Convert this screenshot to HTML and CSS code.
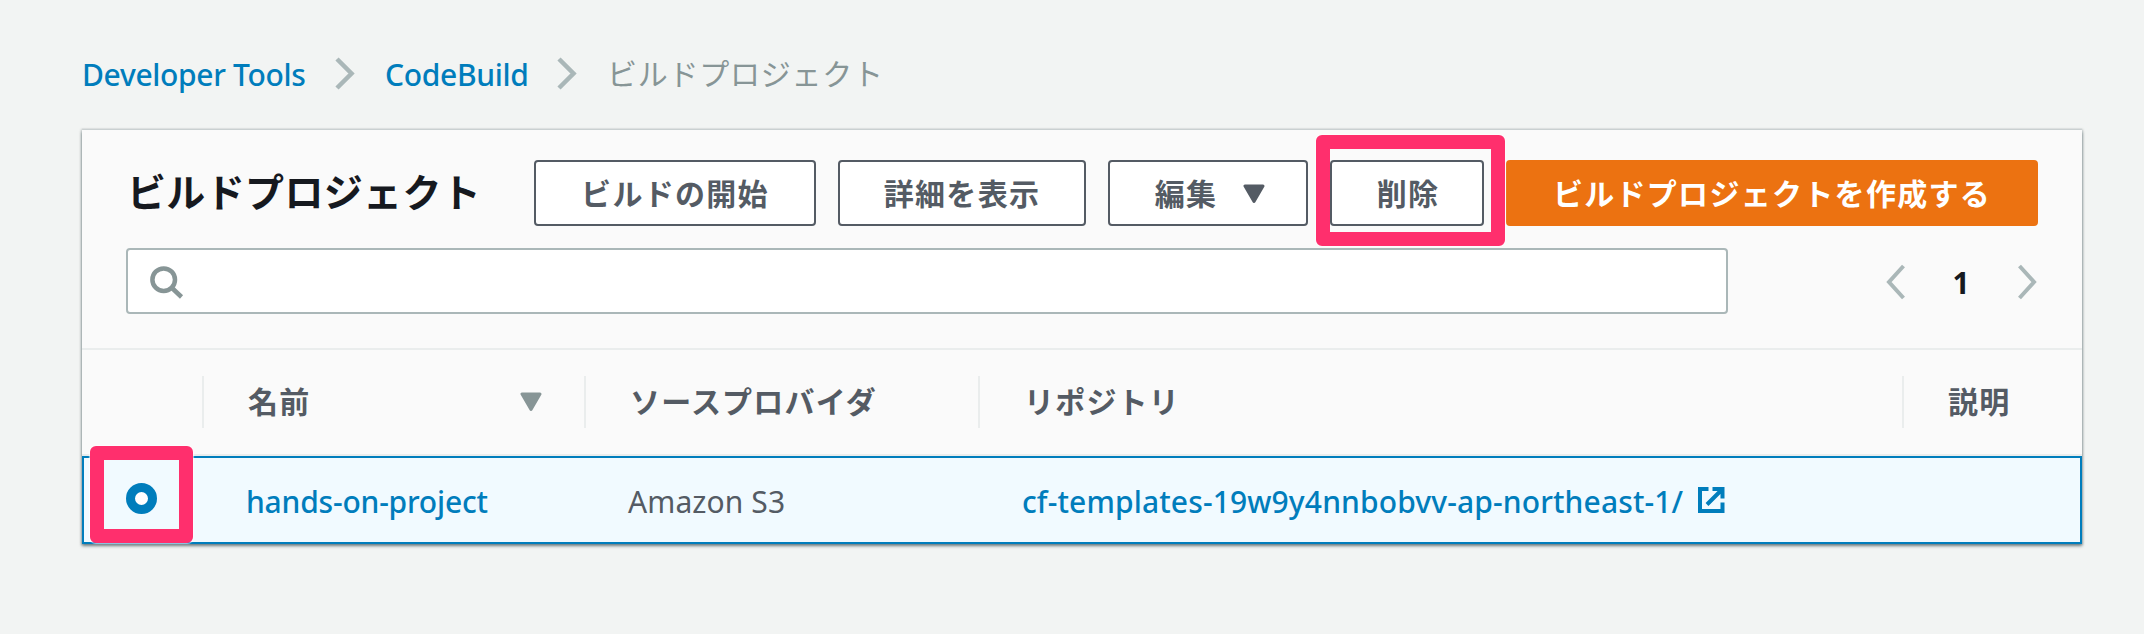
FILE: index.html
```html
<!DOCTYPE html>
<html lang="ja">
<head>
<meta charset="utf-8">
<title>ビルドプロジェクト</title>
<link rel="stylesheet" href="styles.css">
</head>
<body>
<nav class="crumbs">
  <a class="crumb crumb-tools">Developer Tools</a>
  <svg class="crumb-sep" width="20" height="34" viewBox="0 0 20 34"><path d="M2 2L16.500 16.500L2 31" fill="none" stroke="#aab7b8" stroke-width="4.500"/></svg>
  <a class="crumb crumb-build">CodeBuild</a>
  <svg class="crumb-sep" width="20" height="34" viewBox="0 0 20 34"><path d="M2 2L16.500 16.500L2 31" fill="none" stroke="#aab7b8" stroke-width="4.500"/></svg>
  <span class="crumb-current">ビルドプロジェクト</span>
</nav>
<main class="card">
  <header class="toolbar">
    <h1 class="title">ビルドプロジェクト</h1>
    <div class="actions">
      <button class="btn btn-start">ビルドの開始</button>
      <button class="btn btn-detail">詳細を表示</button>
      <button class="btn btn-edit">編集<svg class="caret" width="22" height="20" viewBox="0 0 22 20"><path d="M2 2H20L11 17.500Z" fill="#545b64" stroke="#545b64" stroke-width="3" stroke-linejoin="round"/></svg></button>
      <div class="delete-wrap"><button class="btn btn-delete">削除</button><span class="mark mark-delete"></span></div>
      <button class="btn btn-primary">ビルドプロジェクトを作成する</button>
    </div>
  </header>
  <div class="filter">
    <div class="search">
      <svg width="36" height="36" viewBox="0 0 36 36"><circle cx="15.700" cy="16.700" r="11.300" fill="none" stroke="#879596" stroke-width="4.500"/><path d="M23.500 24.500L33.500 34" stroke="#879596" stroke-width="4.500"/></svg>
    </div>
    <div class="pager">
      <svg width="20" height="36" viewBox="0 0 20 36"><path d="M17.500 2L3 18L17.500 34" fill="none" stroke="#aab7b8" stroke-width="4"/></svg>
      <span class="page">1</span>
      <svg width="20" height="36" viewBox="0 0 20 36"><path d="M1.500 2L16 18L1.500 34" fill="none" stroke="#aab7b8" stroke-width="4"/></svg>
    </div>
  </div>
  <section class="table">
    <div class="row head">
      <div class="cell"></div>
      <div class="cell name-head"><span>名前</span><svg width="22" height="20" viewBox="0 0 22 20"><path d="M2 2H20L11 17.500Z" fill="#879596" stroke="#879596" stroke-width="3" stroke-linejoin="round"/></svg></div>
      <div class="cell"><span>ソースプロバイダ</span></div>
      <div class="cell"><span>リポジトリ</span></div>
      <div class="cell"><span>説明</span></div>
    </div>
    <div class="row item">
      <div class="radio-cell"><span class="radio"></span><span class="mark mark-radio"></span></div>
      <a class="link name">hands-on-project</a>
      <span class="provider">Amazon S3</span>
      <a class="link repo"><span>cf-templates-19w9y4nnbobvv-ap-northeast-1/</span><svg width="28" height="28" viewBox="0 0 28 28"><path d="M11.500 3H3V25H25.500V16.500M15.500 3H25.500V12.500M25 3.500L10 18.500" fill="none" stroke="#007dbc" stroke-width="4"/></svg></a>
    </div>
  </section>
</main>
</body>
</html>
```
FILE: styles.css
```css
* { box-sizing: border-box; }
body {
  margin: 0;
  height: 634px;
  padding: 44px 62px 0 82px;
  background: #f2f4f3;
  font-family: "Noto Sans", "Noto Sans CJK JP", sans-serif;
  font-size: 30px;
  color: #545b64;
  overflow: hidden;
}
.crumbs { display: flex; align-items: center; height: 60px; margin-bottom: 26px; line-height: 60px; white-space: nowrap; }
.crumb, .link { color: #007dbc; font-weight: 500; }
.crumb { padding-top: 2px; letter-spacing: -.32px; }
.crumb-tools { width: 253px; }
.crumb-sep { flex: none; }
.crumb-build { width: 172px; margin-left: 30px; }
.crumb-current { margin-left: 30px; padding-bottom: 5px; color: #879596; font-family: "Noto Sans CJK JP", sans-serif; letter-spacing: .75px; }
.card {
  width: 2000px;
  height: 414px;
  background: #fafafa;
  box-shadow: 0 2px 3px rgba(0, 28, 36, .5), 0 0 2px 1px rgba(0, 28, 36, .16), 0 -2px 0 #eaeded;
}
.toolbar { display: flex; justify-content: space-between; height: 96px; padding: 30px 44px 0 45px; }
.title { margin: 0; font: 700 39px/60px "Noto Sans CJK JP", sans-serif; color: #16191f; letter-spacing: .35px; white-space: nowrap; }
.actions { display: flex; gap: 22px; }
.btn {
  display: flex;
  align-items: center;
  justify-content: center;
  height: 66px;
  padding: 0 0 2px;
  border: 2px solid #545b64;
  border-radius: 4px;
  background: #fff;
  color: #545b64;
  font: 700 30px/60px "Noto Sans CJK JP", sans-serif;
  letter-spacing: 1.3px;
  white-space: nowrap;
}
.btn-start { width: 282px; }
.btn-detail { width: 248px; }
.btn-edit { width: 200px; padding-left: 4px; }
.caret { margin: 3px 0 0 26px; }
.delete-wrap { position: relative; }
.btn-delete { width: 154px; padding-left: 2px; }
.btn-primary { width: 532px; border-color: #ec7211; background: #ec7211; color: #fff; }
.mark { position: absolute; border: 14px solid #ff2f6d; border-radius: 6px; box-shadow: 0 0 1px 1px rgba(255, 255, 255, .6); }
.mark-delete { left: -14px; top: -25px; width: 189px; height: 111px; }
.filter { display: flex; justify-content: space-between; height: 124px; padding: 22px 44px 0; border-bottom: 2px solid #eaeded; }
.search { display: flex; align-items: center; width: 1602px; height: 66px; padding-left: 20px; border: 2px solid #aab7b8; border-radius: 4px; background: #fff; }
.pager { display: flex; align-items: center; justify-content: space-between; width: 152px; height: 68px; }
.page { padding: 1px 2px 0 0; font-size: 30px; font-weight: 700; color: #16191f; }
.row { display: grid; grid-template-columns: 122px 382px 394px 924px 178px; }
.head { height: 106px; padding: 26px 0; border-bottom: 2px solid #eaeded; font: 700 30px/49px "Noto Sans CJK JP", sans-serif; letter-spacing: 1.2px; }
.head .cell { height: 52px; padding-left: 44px; border-right: 2px solid #eaeded; white-space: nowrap; }
.head .cell:last-child { border-right: 0; }
.head .name-head { display: flex; align-items: center; justify-content: space-between; padding-right: 42px; }
.name-head span { padding-bottom: 3px; }
.item { height: 88px; align-items: center; border: 2px solid #007dbc; background: #f1faff; white-space: nowrap; grid-template-columns: 120px 382px 394px 924px; }
.radio-cell { position: relative; height: 84px; }
.radio { display: block; width: 31px; height: 31px; margin: 25px 0 0 41.500px; border: 9px solid #007dbc; border-radius: 50%; background: #fff; }
.mark-radio { left: 6px; top: -12px; width: 103px; height: 97px; }
.link.name, .provider { padding: 2px 0 0 42px; }
.link.name { letter-spacing: -.2px; }
.provider { letter-spacing: .1px; }
.repo { display: flex; align-items: center; gap: 14px; padding-left: 42px; letter-spacing: .13px; }
.repo span { padding-top: 2px; }
```
